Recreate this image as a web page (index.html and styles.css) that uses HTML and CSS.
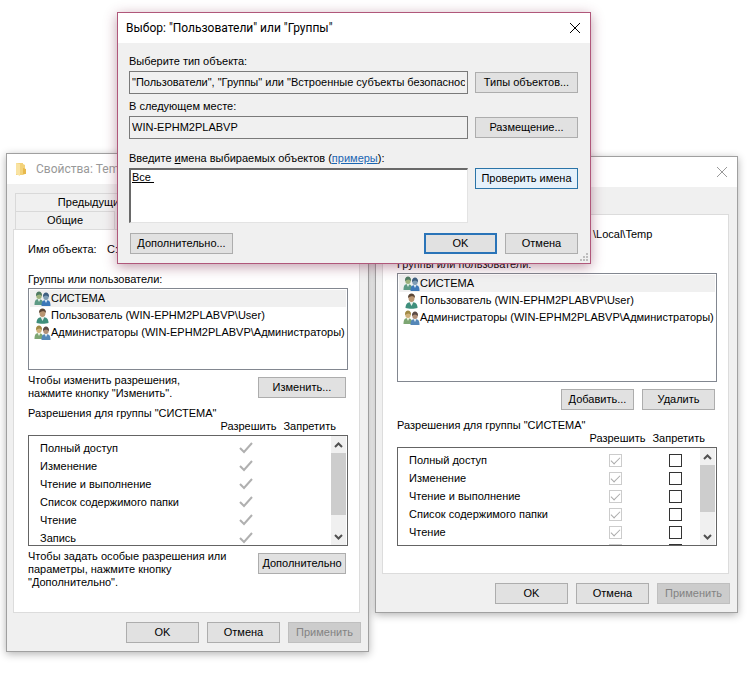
FILE: index.html
```html
<!DOCTYPE html>
<html lang="ru">
<head>
    <meta charset="UTF-8">
    <meta name="viewport" content="width=device-width, initial-scale=1.0">
    <title>Свойства: Temp</title>
    <link rel="stylesheet" href="styles.css">
</head>
<body>

    <!-- Shared icons -->
    <svg class="sprite" aria-hidden="true">
        <symbol id="icon-system" viewBox="0 0 16 16">
            <path d="M0 14c0-4 1-6 4-6s5 2 5 6z" fill="#5d9a84"/>
            <path d="M3 8l1.500 3L6 8z" fill="#e4efe6"/>
            <ellipse cx="4.500" cy="4.500" rx="2.800" ry="3.500" fill="#9db27c"/>
            <path d="M1.500 5C1-1 8-1 7.500 5 6 3 4 3 1.500 5z" fill="#4f7a62"/>
            <path d="M7 15c0-4 1-6 4.500-6s4.500 2 4.500 6z" fill="#3c78b8"/>
            <path d="M10 9l1.500 3L13 9z" fill="#dceaf6"/>
            <ellipse cx="11.500" cy="5.500" rx="2.800" ry="3.500" fill="#7d9cb4"/>
            <path d="M8.500 6c-.5-6 6.500-6 6 0-2-2-4-2-6 0z" fill="#3f5f80"/>
        </symbol>
        <symbol id="icon-user" viewBox="0 0 16 16">
            <path d="M2 15c0-4 2-6 6-6s6 2 6 6c-3 1-9 1-12 0z" fill="#3f8f7c"/>
            <path d="M6 9l2 4 2-4z" fill="#e8f0ea"/>
            <ellipse cx="8" cy="5" rx="3" ry="4" fill="#b99672"/>
            <path d="M4.500 5C4-1 12-1 11.500 5 10 2.500 7 3 4.500 5z" fill="#5b4636"/>
        </symbol>
        <symbol id="icon-admins" viewBox="0 0 16 16">
            <path d="M0 14c0-4 1-6 4-6s5 2 5 6z" fill="#7da673"/>
            <path d="M3 8l1.500 3L6 8z" fill="#f0f2e2"/>
            <ellipse cx="4.500" cy="4.500" rx="2.800" ry="3.500" fill="#d0b27c"/>
            <path d="M1.500 5C1-1 8-1 7.500 5 6 3 4 3 1.500 5z" fill="#a08a45"/>
            <path d="M7 15c0-4 1-6 4.500-6s4.500 2 4.500 6z" fill="#5587b8"/>
            <path d="M10 9l1.500 3L13 9z" fill="#e4edf6"/>
            <ellipse cx="11.500" cy="5.500" rx="2.800" ry="3.500" fill="#b08f78"/>
            <path d="M8.500 6c-.5-6 6.500-6 6 0-2-2-4-2-6 0z" fill="#5b4a45"/>
        </symbol>
        <symbol id="icon-tick" viewBox="0 0 14 12">
            <path d="M1 6l4 4 8-9" fill="none" stroke="#b0b0b0" stroke-width="2"/>
        </symbol>
        <symbol id="icon-up" viewBox="0 0 9 6">
            <path d="M1 5l3.500-3.500L8 5" fill="none" stroke="#505050" stroke-width="2"/>
        </symbol>
        <symbol id="icon-down" viewBox="0 0 9 6">
            <path d="M1 1l3.500 3.500L8 1" fill="none" stroke="#505050" stroke-width="2"/>
        </symbol>
        <symbol id="icon-close" viewBox="0 0 12 12">
            <path d="M1 1l10 10M11 1L1 11" fill="none" stroke="currentColor"/>
        </symbol>
    </svg>

    <main class="desktop">

        <!-- Properties window -->
        <section class="window">
            <header class="titlebar inactive">
                <svg class="folder" viewBox="0 0 12 14" aria-hidden="true">
                    <path d="M1 1h7v1l2 1v9l-2 1H1z" fill="#f3d27a"/>
                    <path d="M1 1l4 1v12l-4-2z" fill="#f9e3a2"/>
                    <path d="M8 6l3 1v5H8z" fill="#e8b94c"/>
                </svg>
                <h2>Свойства: Temp</h2>
            </header>
            <div class="tabs">
                <button class="tab tab-versions" type="button">Предыдущие версии</button>
            </div>
            <div class="tabs">
                <button class="tab tab-general" type="button">Общие</button>
            </div>
            <div class="panel">
                <div class="object-name">
                    <span class="object-label">Имя объекта:</span>
                    <span>C:\</span>
                </div>
                <p class="groups-label">Группы или пользователи:</p>
                <ul class="list">
                    <li class="selected"><svg class="user-icon"><use href="#icon-system"/></svg>СИСТЕМА</li>
                    <li><svg class="user-icon"><use href="#icon-user"/></svg>Пользователь (WIN-EPHM2PLABVP\User)</li>
                    <li><svg class="user-icon"><use href="#icon-admins"/></svg>Администраторы (WIN-EPHM2PLABVP\Администраторы)</li>
                </ul>
                <div class="note">
                    <p>Чтобы изменить разрешения,<br>нажмите кнопку "Изменить".</p>
                    <button class="btn btn-medium" type="button">Изменить...</button>
                </div>
                <p class="perm-label">Разрешения для группы "СИСТЕМА"</p>
                <div class="perm-head"><span>Разрешить</span><span>Запретить</span></div>
                <div class="perm-box">
                    <table class="perms">
                        <tr><th>Полный доступ</th><td><svg class="tick"><use href="#icon-tick"/></svg></td><td></td></tr>
                        <tr><th>Изменение</th><td><svg class="tick"><use href="#icon-tick"/></svg></td><td></td></tr>
                        <tr><th>Чтение и выполнение</th><td><svg class="tick"><use href="#icon-tick"/></svg></td><td></td></tr>
                        <tr><th>Список содержимого папки</th><td><svg class="tick"><use href="#icon-tick"/></svg></td><td></td></tr>
                        <tr><th>Чтение</th><td><svg class="tick"><use href="#icon-tick"/></svg></td><td></td></tr>
                        <tr><th>Запись</th><td><svg class="tick"><use href="#icon-tick"/></svg></td><td></td></tr>
                    </table>
                    <div class="scrollbar">
                        <svg class="arrow"><use href="#icon-up"/></svg>
                        <div class="track"><div class="thumb"></div></div>
                        <svg class="arrow"><use href="#icon-down"/></svg>
                    </div>
                </div>
                <div class="note">
                    <p>Чтобы задать особые разрешения или<br>параметры, нажмите кнопку<br>"Дополнительно".</p>
                    <button class="btn btn-medium" type="button">Дополнительно</button>
                </div>
            </div>
            <footer class="buttons">
                <button class="btn" type="button">OK</button>
                <button class="btn" type="button">Отмена</button>
                <button class="btn" type="button" disabled>Применить</button>
            </footer>
        </section>

        <!-- Permissions window -->
        <section class="window window-perms">
            <header class="titlebar inactive">
                <button class="close" type="button" aria-label="Закрыть"><svg><use href="#icon-close"/></svg></button>
            </header>
            <div class="tabs"></div>
            <div class="panel">
                <div class="object-name object-path">\Local\Temp</div>
                <p class="groups-label">Группы или пользователи:</p>
                <ul class="list">
                    <li class="selected"><svg class="user-icon"><use href="#icon-system"/></svg>СИСТЕМА</li>
                    <li><svg class="user-icon"><use href="#icon-user"/></svg>Пользователь (WIN-EPHM2PLABVP\User)</li>
                    <li><svg class="user-icon"><use href="#icon-admins"/></svg>Администраторы (WIN-EPHM2PLABVP\Администраторы)</li>
                </ul>
                <div class="list-buttons">
                    <button class="btn" type="button">Добавить...</button>
                    <button class="btn" type="button">Удалить</button>
                </div>
                <p class="perm-label">Разрешения для группы "СИСТЕМА"</p>
                <div class="perm-head"><span>Разрешить</span><span>Запретить</span></div>
                <div class="perm-box">
                    <table class="perms">
                        <tr><th>Полный доступ</th><td><input type="checkbox" aria-label="Полный доступ: разрешить" checked disabled></td><td><input type="checkbox" aria-label="Полный доступ: запретить"></td></tr>
                        <tr><th>Изменение</th><td><input type="checkbox" aria-label="Изменение: разрешить" checked disabled></td><td><input type="checkbox" aria-label="Изменение: запретить"></td></tr>
                        <tr><th>Чтение и выполнение</th><td><input type="checkbox" aria-label="Чтение и выполнение: разрешить" checked disabled></td><td><input type="checkbox" aria-label="Чтение и выполнение: запретить"></td></tr>
                        <tr><th>Список содержимого папки</th><td><input type="checkbox" aria-label="Список содержимого папки: разрешить" checked disabled></td><td><input type="checkbox" aria-label="Список содержимого папки: запретить"></td></tr>
                        <tr><th>Чтение</th><td><input type="checkbox" aria-label="Чтение: разрешить" checked disabled></td><td><input type="checkbox" aria-label="Чтение: запретить"></td></tr>
                        <tr><th></th><td><input type="checkbox" aria-label="Запись: разрешить" checked disabled></td><td><input type="checkbox" aria-label="Запись: запретить"></td></tr>
                    </table>
                    <div class="scrollbar">
                        <svg class="arrow"><use href="#icon-up"/></svg>
                        <div class="track"><div class="thumb"></div></div>
                        <svg class="arrow"><use href="#icon-down"/></svg>
                    </div>
                </div>
            </div>
            <footer class="buttons">
                <button class="btn" type="button">OK</button>
                <button class="btn" type="button">Отмена</button>
                <button class="btn" type="button" disabled>Применить</button>
            </footer>
        </section>

        <!-- Select users dialog -->
        <section class="dialog">
            <header class="titlebar">
                <h2>Выбор: "Пользователи" или "Группы"</h2>
                <button class="close" type="button" aria-label="Закрыть"><svg><use href="#icon-close"/></svg></button>
            </header>
            <form class="form">
                <label for="type">Выберите тип объекта:</label>
                <div class="form-row">
                    <input class="field" id="type" type="text" readonly value='"Пользователи", "Группы" или "Встроенные субъекты безопасности"'>
                    <button class="btn btn-wide" type="button">Типы объектов...</button>
                </div>
                <label for="place">В следующем месте:</label>
                <div class="form-row">
                    <input class="field" id="place" type="text" readonly value="WIN-EPHM2PLABVP">
                    <button class="btn btn-wide" type="button">Размещение...</button>
                </div>
                <div class="names-label">
                    <label for="names">Введите <u>и</u>мена выбираемых объектов</label> (<a href="#">примеры</a>):
                </div>
                <div class="form-row form-row-top">
                    <textarea class="names" id="names" spellcheck="false">Все </textarea>
                    <button class="btn btn-wide btn-hot" type="button">Проверить имена</button>
                </div>
                <div class="form-footer">
                    <button class="btn btn-wide" type="button">Дополнительно...</button>
                    <div class="form-actions">
                        <button class="btn btn-default" type="button">OK</button>
                        <button class="btn" type="button">Отмена</button>
                    </div>
                </div>
            </form>
            <svg class="grip" viewBox="0 0 9 9" aria-hidden="true">
                <path d="M7 0h2v2H7zM4 3h2v2H4zM7 3h2v2H7zM1 6h2v2H1zM4 6h2v2H4zM7 6h2v2H7z" fill="#bdbdbd"/>
            </svg>
        </section>

    </main>

</body>
</html>
```
FILE: styles.css
```css
* {
    box-sizing: border-box;
}

body {
    margin: 0;
    background-color: #fff;
    color: #000;
    font-family: "Liberation Sans", Arial, sans-serif;
    font-size: 11px;
    line-height: 13px;
}

p, h2, ul {
    margin: 0;
    padding: 0;
}

button, input, textarea {
    font: inherit;
    color: inherit;
    margin: 0;
}

.sprite {
    position: absolute;
    width: 0;
    height: 0;
}

.desktop {
    position: relative;
    display: grid;
    grid-template-columns: 1fr 1fr;
    align-items: start;
    gap: 6px;
    padding: 153px 9px 29px 6px;
}

/* Windows */
.window {
    min-width: 0;
    background-color: #f0f0f0;
    border: 1px solid #a0a0a0;
    box-shadow: 0 2px 8px rgba(0, 0, 0, 0.3);
}

.window-perms {
    margin-top: 3px;
}

.titlebar {
    display: flex;
    align-items: center;
    height: 30px;
    padding: 0 9px 0 8px;
    background-color: #fff;
}

.titlebar h2 {
    flex: 1;
    font-family: Roboto, "Open Sans", sans-serif;
    font-size: 12px;
    font-weight: normal;
    line-height: 16px;
    white-space: nowrap;
}

.inactive {
    color: #999;
}

.folder {
    width: 12px;
    height: 14px;
    margin: 0 9px 0 0;
}

.close {
    width: 12px;
    height: 12px;
    margin-left: auto;
    padding: 0;
    border: none;
    background: none;
}

.close svg {
    display: block;
    width: 12px;
    height: 12px;
}

/* Tabs */
.tabs {
    display: flex;
    height: 18px;
    padding: 0 10px 0 8px;
}

.titlebar + .tabs {
    margin-top: 9px;
}

.tab {
    padding: 0;
    border: 1px solid #d9d9d9;
    border-bottom: none;
    background-color: #f0f0f0;
}

.tab-versions {
    width: 192px;
}

.tab-general {
    width: 100px;
}

.panel {
    margin: 0 8px 0 6px;
    padding: 13px 11px 23px 14px;
    border: 1px solid #dcdcdc;
    background-color: #fff;
}

.window-perms .panel {
    padding-bottom: 27px;
}

.object-name {
    display: flex;
    white-space: nowrap;
}

.object-label {
    width: 79px;
}

.object-path {
    padding-left: 196px;
}

.groups-label {
    margin-top: 17px;
}

.list {
    height: 82px;
    margin-top: 2px;
    padding: 1px;
    border: 1px solid #828790;
    list-style: none;
    overflow: hidden;
}

.window-perms .list {
    height: 109px;
}

.list li {
    display: flex;
    align-items: center;
    height: 17px;
    padding-left: 4px;
    white-space: nowrap;
}

.list .selected {
    background-color: #f0f0f0;
}

.user-icon {
    flex: none;
    width: 17px;
    height: 16px;
}

.note {
    display: flex;
    justify-content: space-between;
    align-items: flex-start;
    padding: 4px 2px 0 0;
    white-space: nowrap;
}

.note .btn {
    margin-top: 3px;
}

.list-buttons {
    display: flex;
    justify-content: flex-end;
    gap: 8px;
    padding: 7px 2px 2px 0;
}

/* Permissions */
.perm-label {
    margin-top: 7px;
}

.perm-head {
    display: flex;
    justify-content: flex-end;
    gap: 7px;
    padding-right: 12px;
}

.perm-box {
    display: flex;
    align-items: flex-start;
    height: 111px;
    margin-top: 2px;
    padding-right: 1px;
    border: 1px solid #646464;
    overflow: hidden;
}

.window-perms .perm-box {
    height: 99px;
}

.perms {
    flex: 1;
    margin-top: 3px;
    border-collapse: collapse;
    table-layout: fixed;
}

.perms th {
    padding: 0 0 0 11px;
    font-weight: normal;
    text-align: left;
    white-space: nowrap;
}

.perms td {
    width: 50px;
    height: 18px;
    padding: 0;
}

.perms td:nth-child(2) {
    width: 70px;
}

.perms input {
    display: block;
    width: 13px;
    height: 13px;
    margin: 0 auto;
    appearance: none;
    border: 1px solid #333;
    background-color: #fff;
}

.perms input:disabled {
    border-color: #ccc;
}

.perms input:checked::before {
    content: "";
    display: block;
    width: 8px;
    height: 4px;
    margin: 2px 0 0 1px;
    border-left: 1px solid #aaa;
    border-bottom: 1px solid #aaa;
    transform: rotate(-45deg);
}

.tick {
    display: block;
    width: 14px;
    height: 12px;
    margin: 0 auto;
}

.scrollbar {
    display: flex;
    flex-direction: column;
    align-items: center;
    align-self: stretch;
    width: 15px;
    background-color: #f0f0f0;
}

.arrow {
    width: 9px;
    height: 6px;
    margin: 6px 0 5px;
}

.track {
    flex: 1;
    width: 100%;
}

.thumb {
    height: 82%;
    background-color: #cdcdcd;
}

.window-perms .thumb {
    height: 75%;
}

/* Buttons */
.btn {
    flex: none;
    width: 73px;
    height: 21px;
    padding: 0;
    border: 1px solid #adadad;
    background-color: #e1e1e1;
    text-align: center;
    white-space: nowrap;
}

.btn:disabled {
    border-color: #bfbfbf;
    background-color: #ccc;
    color: #838383;
}

.btn-medium {
    width: 88px;
}

.btn-wide {
    width: 103px;
}

.btn-hot {
    border-color: #2a74a8;
    background-color: #e5f1fb;
}

.btn-default {
    border: 2px solid #2a74b8;
}

.buttons {
    display: flex;
    justify-content: flex-end;
    gap: 8px;
    padding: 9px 7px 8px;
}

/* Dialog */
.dialog {
    position: absolute;
    top: 12px;
    left: 117px;
    right: 156px;
    border: 1px solid #b0577a;
    background-color: #f0f0f0;
    box-shadow: 0 3px 12px rgba(120, 40, 70, 0.45);
}

.form {
    display: flex;
    flex-direction: column;
    padding: 12px 12px 9px 11px;
}

.form-row {
    display: flex;
    align-items: center;
    gap: 7px;
    margin: 3px 0 6px;
}

.form-row-top {
    align-items: flex-start;
    margin-bottom: 10px;
}

.field {
    flex: 1;
    min-width: 0;
    height: 23px;
    padding: 0 2px 2px;
    border: 1px solid #7a7a7a;
    background-color: #f0f0f0;
}

.names-label {
    margin-top: 7px;
}

.names-label a {
    color: #1a66b3;
}

.names {
    flex: 1;
    height: 55px;
    padding: 1px;
    border: 1px solid #e3e3e3;
    border-top: 2px solid #696969;
    border-left: 2px solid #696969;
    background-color: #fff;
    resize: none;
    text-decoration: underline;
}

.form-footer {
    display: flex;
    justify-content: space-between;
    padding-left: 1px;
}

.form-actions {
    display: flex;
    gap: 8px;
}

.grip {
    position: absolute;
    right: 2px;
    bottom: 1px;
    width: 9px;
    height: 9px;
}
```
